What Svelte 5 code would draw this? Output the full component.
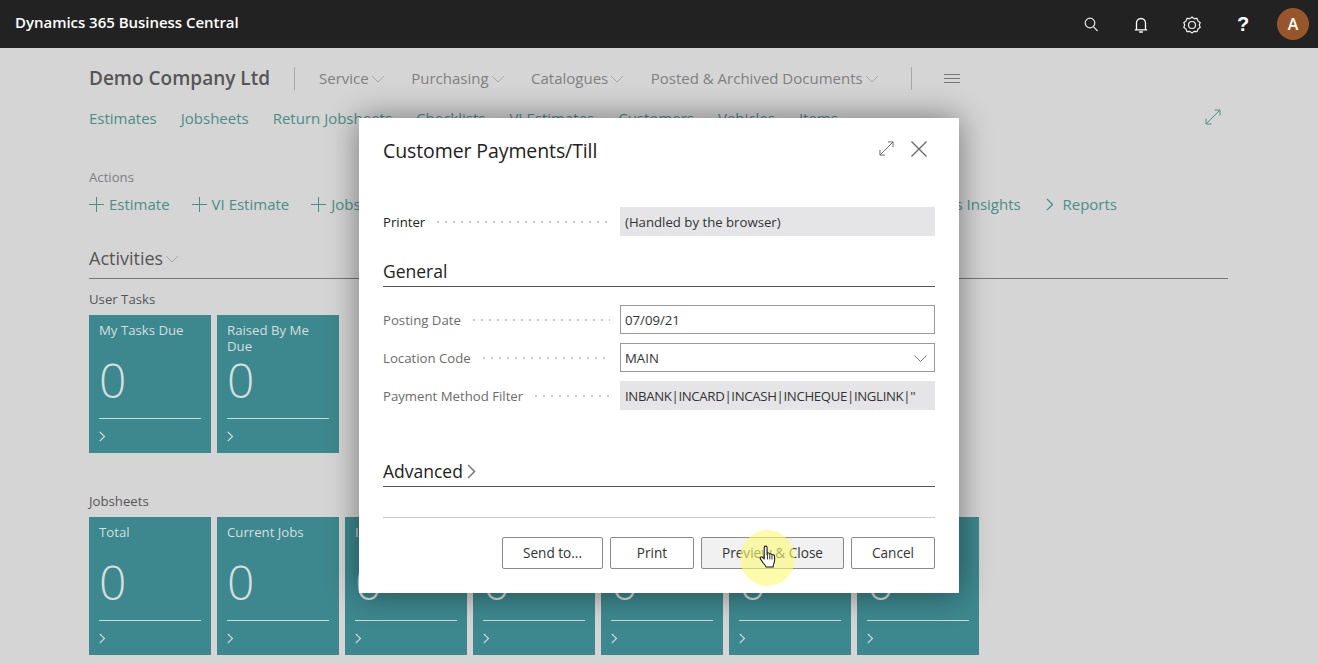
<script lang="ts">
  const navItems = ['Service', 'Purchasing', 'Catalogues', 'Posted & Archived Documents'];
  const links = ['Estimates', 'Jobsheets', 'Return Jobsheets', 'Checklists', 'VI Estimates', 'Customers', 'Vehicles', 'Items'];
  const actions = ['Estimate', 'VI Estimate', 'Jobsheet', 'Return Jobsheet', 'Checklist', 'Customer'];
  const userTasks = ['My Tasks Due', 'Raised By Me Due'];
  const jobsheets = ['Total', 'Current Jobs', 'In Progress', 'Completed', 'Invoiced', 'Overdue', 'Returns'];
</script>

{#snippet chevronDown()}
  <svg class="chev" width="14" height="8" viewBox="0 0 14 8"><path d="M1 1l6 6 6-6" fill="none" stroke="currentColor" /></svg>
{/snippet}

{#snippet chevronRight(size = 10)}
  <svg width={size * 0.6} height={size} viewBox="0 0 6 10"><path d="M.7.7L5 5 .7 9.3" fill="none" stroke="currentColor" /></svg>
{/snippet}

{#snippet expand(size = 16)}
  <svg width={size} height={size} viewBox="0 0 16 16"><path d="M1 15L15 1M9.5 1H15V6.5M1 9.5V15H6.5" fill="none" stroke="currentColor" /></svg>
{/snippet}

{#snippet tile(label)}
  <div class="tile">
    <div class="tile-label">{label}</div>
    <div class="tile-value">0</div>
    <div class="tile-foot">{@render chevronRight(11)}</div>
  </div>
{/snippet}

<div class="page">
  <header class="topbar">
    <div class="brand">Dynamics 365 Business Central</div>
    <div class="top-icons">
      <svg class="search" width="14" height="15" viewBox="0 0 14 15"><circle cx="6" cy="6" r="4.8" fill="none" stroke="#e8e8e8" stroke-width="1.2" /><path d="M9.6 9.8l4 4.2" stroke="#e8e8e8" stroke-width="1.2" /></svg>
      <svg class="bell" width="14" height="16" viewBox="0 0 14 16"><path d="M2.500 12.500V6a4.500 4.500 0 0 1 9 0v6.500M.8 12.800h12.400M5.200 15h3.600" fill="none" stroke="#fff" stroke-width="1.300" /></svg>
      <svg width="18" height="18" viewBox="0 0 18 18"><circle cx="9" cy="9" r="3.500" fill="none" stroke="#f0f0f0" stroke-width="1.200" /><path d="M9 1l2.200 1.700 2.800-.300 1 2.600 2.200 1.700L16.300 9l.9 2.300-2.200 1.700-1 2.600-2.800-.300L9 17l-2.200-1.700-2.800.300-1-2.600-2.200-1.700L1.700 9 .8 6.700 3 5l1-2.600 2.800.300z" fill="none" stroke="#f0f0f0" stroke-width="1.200" /></svg>
      <span class="help">?</span>
      <span class="avatar">A</span>
    </div>
  </header>

  <main class="content">
    <div class="company-row">
      <span class="company">Demo Company Ltd</span>
      <span class="vsep"></span>
      <nav class="nav">
        {#each navItems as item}
          <span class="nav-item">{item}{@render chevronDown()}</span>
        {/each}
      </nav>
      <span class="vsep second"></span>
      <svg class="menu" width="16" height="9" viewBox="0 0 16 9"><path d="M0 .5h16M0 4.500h16M0 8.500h16" stroke="#777" /></svg>
    </div>

    <div class="links-row">
      {#each links as link}
        <span class="link">{link}</span>
      {/each}
      <span class="page-expand">{@render expand(16)}</span>
    </div>

    <div class="actions-title">Actions</div>
    <div class="actions-row">
      {#each actions as action}
        <span class="action">
          <svg width="15" height="15" viewBox="0 0 15 15"><path d="M7.500 0v15M0 7.500h15" stroke="currentColor" /></svg>
          {action}
        </span>
      {/each}
      <span class="action push"><span class="action-chev">{@render chevronRight(13)}</span>Sales Insights</span>
      <span class="action"><span class="action-chev">{@render chevronRight(13)}</span>Reports</span>
    </div>

    <div class="activities">Activities{@render chevronDown()}</div>

    <div class="group-title first">User Tasks</div>
    <div class="tiles">
      {#each userTasks as label}
        {@render tile(label)}
      {/each}
    </div>

    <div class="group-title second-group">Jobsheets</div>
    <div class="tiles">
      {#each jobsheets as label}
        {@render tile(label)}
      {/each}
    </div>
  </main>

  <div class="modal">
    <div class="modal-head">
      <h1>Customer Payments/Till</h1>
      <span class="modal-icons">
        <span class="modal-expand">{@render expand(15)}</span>
        <svg width="16" height="16" viewBox="0 0 16 16"><path d="M.5.5l15 15M15.500.5l-15 15" stroke="#666" stroke-width="1.300" /></svg>
      </span>
    </div>

    <div class="field printer">
      <span class="field-label dark">Printer</span>
      <span class="dots"></span>
      <span class="value readonly">(Handled by the browser)</span>
    </div>

    <div class="section">General</div>
    <div class="field">
      <span class="field-label">Posting Date</span>
      <span class="dots"></span>
      <span class="value input">07/09/21</span>
    </div>
    <div class="field">
      <span class="field-label">Location Code</span>
      <span class="dots"></span>
      <span class="value input select">MAIN
        <svg width="13" height="7" viewBox="0 0 13 7"><path d="M.5.5l6 6 6-6" fill="none" stroke="#777" /></svg>
      </span>
    </div>
    <div class="field">
      <span class="field-label">Payment Method Filter</span>
      <span class="dots"></span>
      <span class="value readonly tight">INBANK|INCARD|INCASH|INCHEQUE|INGLINK|''</span>
    </div>

    <div class="section advanced">Advanced<span class="adv-chev">{@render chevronRight(15)}</span></div>

    <div class="modal-foot">
      <button class="send">Send to...</button>
      <button class="print">Print</button>
      <button class="preview">Preview &amp; Close</button>
      <button class="cancel">Cancel</button>
    </div>
  </div>

  <div class="click-mark"></div>
  <svg class="hand" width="18" height="25" viewBox="0 0 19 26">
    <path d="M5.500 14.500V2.500a1.500 1.500 0 0 1 3 0V10l.4-1.500c1.200-.6 2.300 0 2.400 1 .8-.7 2.200-.3 2.400.8 1-.6 2.300-.1 2.500 1 .5 2.600.3 6-.7 8.700-.4 1-.6 2-.6 3H7.500c-.6-1.700-2-3-3.200-4.500L1.500 14.500c-1-1.500 1-3 2.300-1.700z" fill="#fff" stroke="#111" stroke-width="1.100" stroke-linejoin="round" />
    <path d="M9 10v5M11.400 10v5M13.700 11v4" stroke="#111" stroke-width=".9" />
  </svg>
</div>

<style>
  :global(body) {
    margin: 0;
    background: #d5d5d5;
    font-family: "Open Sans", "Noto Sans", sans-serif;
  }
  .page {
    position: relative;
    height: 663px;
    overflow: hidden;
    background: #d5d5d5;
  }
  .topbar {
    display: flex;
    align-items: center;
    justify-content: space-between;
    height: 48px;
    padding: 0 9px 0 15px;
    background: #222;
    color: #fff;
  }
  .brand {
    font-size: 15px;
    font-weight: 600;
    letter-spacing: -0.03px;
    margin-top: -4px;
  }
  .top-icons {
    display: flex;
    align-items: center;
    gap: 34px;
    padding-top: 1px;
  }
  .search {
    margin-right: 2px;
  }
  .bell {
    margin-right: 1px;
  }
  .help {
    width: 12px;
    margin-left: 2px;
    font-size: 20px;
    font-weight: 700;
    text-align: center;
    font-family: "Liberation Sans", sans-serif;
  }
  .avatar {
    display: flex;
    align-items: center;
    justify-content: center;
    width: 32px;
    height: 32px;
    margin-left: -6px;
    margin-top: -1px;
    border-radius: 50%;
    background: #96562a;
    font-size: 16px;
    font-weight: 600;
  }
  .content {
    padding-left: 89px;
    width: 1139px;
  }
  .company-row {
    display: flex;
    align-items: center;
    height: 24px;
    margin-top: 18px;
    color: #808080;
  }
  .company {
    font-size: 19px;
    font-weight: 600;
    color: #555;
  }
  .vsep {
    width: 1px;
    height: 23px;
    margin: 0 24px;
    background: #a8a8a8;
  }
  .vsep.second {
    margin: 0 32px 0 32px;
  }
  .nav {
    display: flex;
    gap: 26.500px;
    margin-top: -1px;
  }
  .nav-item {
    display: flex;
    align-items: center;
    gap: 2px;
    font-size: 15px;
  }
  .chev {
    color: #a5a5a5;
    margin-top: 2px;
  }
  .links-row {
    display: flex;
    align-items: center;
    gap: 24px;
    margin-top: 17px;
    height: 22px;
    color: #4b8d88;
    font-size: 15px;
  }
  .page-expand {
    margin-left: auto;
    margin-right: 7px;
    margin-top: -2px;
    color: #4f8f87;
    line-height: 0;
  }
  .actions-title {
    margin-top: 39px;
    font-size: 13.200px;
    line-height: 18px;
    color: #808080;
  }
  .actions-row {
    display: flex;
    align-items: center;
    gap: 22px;
    margin-top: 8px;
    height: 20px;
    padding-right: 111px;
    color: #4b8d88;
    font-size: 15px;
    white-space: nowrap;
  }
  .action {
    display: flex;
    align-items: center;
    gap: 5px;
  }
  .action.push {
    margin-left: auto;
    margin-right: 3px;
  }
  .action-chev {
    display: flex;
    margin-right: 4px;
  }
  .activities {
    display: flex;
    align-items: center;
    gap: 2px;
    height: 33px;
    margin-top: 32px;
    border-bottom: 1px solid #777;
    padding-bottom: 8px;
    box-sizing: border-box;
    font-size: 18px;
    color: #555;
  }
  .group-title {
    font-size: 13.200px;
    line-height: 18px;
    color: #555;
  }
  .group-title.first {
    margin-top: 11px;
  }
  .group-title.second-group {
    margin-top: 39px;
  }
  .tiles {
    display: flex;
    gap: 6px;
    margin-top: 7px;
  }
  .tile {
    display: flex;
    flex-direction: column;
    flex: none;
    width: 122px;
    height: 138px;
    padding: 7px 10px 0;
    box-sizing: border-box;
    background: #3d888e;
    color: #d5dfdf;
  }
  .tile-label {
    height: 32px;
    font-size: 13.200px;
    line-height: 16px;
  }
  .tile-value {
    height: 52px;
    font-size: 48px;
    line-height: 52px;
    font-weight: 300;
    font-family: "Open Sans", sans-serif;
  }
  .tile-foot {
    display: flex;
    align-items: center;
    height: 34px;
    margin-top: 12px;
    border-top: 1px solid #c9dcdc;
  }
  .modal {
    position: absolute;
    left: 359px;
    top: 118px;
    width: 600px;
    height: 475px;
    padding: 0 24px;
    box-sizing: border-box;
    background: #fff;
    box-shadow: 0 0 30px rgba(0, 0, 0, 0.45);
    color: #222;
    font-size: 13.200px;
  }
  .modal-head {
    display: flex;
    align-items: center;
    justify-content: space-between;
    height: 64px;
  }
  h1 {
    margin: 0;
    font-size: 19.500px;
    font-weight: 400;
    color: #222;
    letter-spacing: -0.1px;
  }
  .modal-icons {
    display: flex;
    align-items: center;
    gap: 17px;
    margin-right: 8px;
    margin-top: -3px;
  }
  .modal-expand {
    color: #666;
    line-height: 0;
  }
  .field {
    display: flex;
    align-items: center;
    height: 29px;
    margin-bottom: 9px;
  }
  .field.printer {
    margin-top: 25px;
    margin-bottom: 19px;
  }
  .field-label {
    padding-top: 1px;
    color: #6b6b6b;
  }
  .field-label.dark {
    color: #222;
  }
  .dots {
    flex: 1;
    height: 2px;
    margin: 1px 10px 0 12px;
    background: radial-gradient(circle at 1px 1px, #c8c8c8 0.8px, transparent 1px) 0 0 / 8px 2px repeat-x;
  }
  .value {
    display: flex;
    align-items: center;
    justify-content: space-between;
    flex: none;
    width: 315px;
    height: 29px;
    padding: 1px 5px 0;
    box-sizing: border-box;
    color: #333;
  }
  .readonly {
    background: #e5e5e7;
  }
  .tight {
    letter-spacing: -0.33px;
  }
  .input {
    border: 1px solid #9a9a9a;
    padding-left: 4px;
  }
  .select {
    padding-right: 7px;
  }
  .section {
    height: 32px;
    margin-bottom: 18px;
    border-bottom: 1px solid #555;
    font-size: 17.500px;
    line-height: 33px;
    color: #222;
    box-sizing: border-box;
  }
  .section.advanced {
    display: flex;
    align-items: center;
    margin: 47px 0 30px;
    height: 30px;
  }
  .adv-chev {
    display: flex;
    margin-left: 4px;
    color: #777;
  }
  .modal-foot {
    display: flex;
    justify-content: flex-end;
    gap: 7px;
    padding-top: 19px;
    border-top: 1px solid #ccc;
  }
  button {
    height: 32px;
    padding: 0 0 2px;
    background: #fff;
    border: 1px solid #8a8a8a;
    border-radius: 2px;
    color: #333;
    font: 13.600px "Open Sans", sans-serif;
  }
  .send { width: 101px; }
  .print { width: 84px; }
  .preview { width: 143px; background: #f1f1f1; }
  .cancel { width: 84px; }
  .click-mark {
    position: absolute;
    left: 740px;
    top: 530px;
    width: 55px;
    height: 56px;
    border-radius: 50%;
    background: rgba(250, 250, 120, 0.62);
  }
  .hand {
    position: absolute;
    left: 759px;
    top: 545px;
  }
</style>
